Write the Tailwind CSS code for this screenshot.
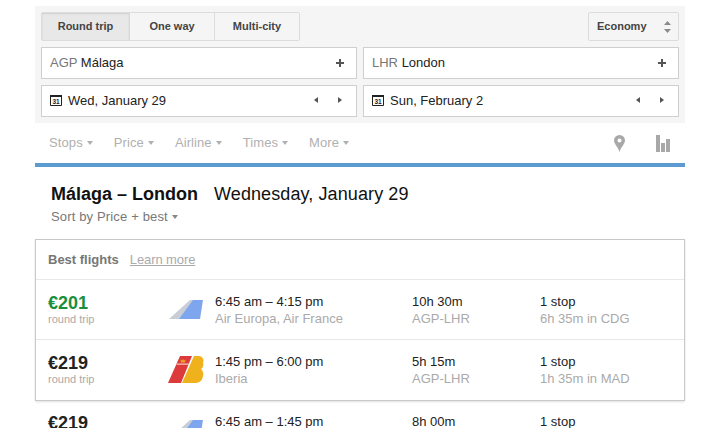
<!DOCTYPE html>
<html lang="en">
<head>
    <meta charset="UTF-8">
    <title>Flights</title>
    <script src="https://cdn.jsdelivr.net/npm/@tailwindcss/browser@4"></script>
</head>
<body class="bg-white h-[428px] overflow-hidden font-['Liberation_Sans',Arial,sans-serif] text-[#222]">
<div class="w-[650px] ml-[35px] pt-[6px]">

    <!-- Search panel -->
    <div class="bg-[#f5f5f5] h-[117px] px-[6px] pt-[6px] flex flex-col gap-[6px]">
        <div class="flex justify-between h-[29px]">
            <div class="flex text-[11px] font-bold text-[#444] border border-[#dcdcdc] rounded-[2px]">
                <div class="w-[88px] flex items-center justify-center bg-[#e8e8e8] border-r border-[#d8d8d8] shadow-[inset_0_1px_2px_rgba(0,0,0,0.1)]">Round trip</div>
                <div class="w-[85px] flex items-center justify-center bg-[#f5f5f5] border-r border-[#dcdcdc]">One way</div>
                <div class="w-[84px] flex items-center justify-center bg-[#f5f5f5]">Multi-city</div>
            </div>
            <div class="w-[91px] flex items-center justify-between pl-[8px] pr-[7px] text-[11px] font-bold text-[#444] border border-[#dcdcdc] rounded-[2px]">
                Economy
                <svg width="7" height="12" viewBox="0 0 7 12"><path d="M3.500 0 7 4H0z M0 8h7l-3.500 4z" fill="#8a8a8a"/></svg>
            </div>
        </div>

        <div class="grid grid-cols-2 gap-[6px]">
            <div class="h-[32px] bg-white border border-[#cfcfcf] flex items-center justify-between pl-[8px] pr-[12px] text-[13px]">
                <span><span class="text-[#777]">AGP</span> Málaga</span>
                <svg class="-mt-[1px]" width="8" height="8" viewBox="0 0 8 8"><path d="M3 0h2v3h3v2H5v3H3V5H0V3h3z" fill="#555"/></svg>
            </div>
            <div class="h-[32px] bg-white border border-[#cfcfcf] flex items-center justify-between pl-[8px] pr-[12px] text-[13px]">
                <span><span class="text-[#777]">LHR</span> London</span>
                <svg class="-mt-[1px]" width="8" height="8" viewBox="0 0 8 8"><path d="M3 0h2v3h3v2H5v3H3V5H0V3h3z" fill="#555"/></svg>
            </div>
            <div class="h-[32px] bg-white border border-[#cfcfcf] flex items-center pl-[8px] pr-[14px] text-[13px]">
                <svg class="mr-[6px] -mt-[1px]" width="12" height="11" viewBox="0 0 12 11"><path d="M.5.500h11v10H.5z" fill="#fff" stroke="#222"/><path d="M0 0h12v2H0z" fill="#222"/><text x="6" y="9" text-anchor="middle" font-size="6.500" font-weight="700" fill="#222">31</text></svg>
                <span class="flex-1">Wed, January 29</span>
                <div class="flex gap-[20px] -mt-[2px]">
                    <svg width="4" height="6" viewBox="0 0 4 6"><path d="M4 0v6L0 3z" fill="#555"/></svg>
                    <svg width="4" height="6" viewBox="0 0 4 6"><path d="M0 0v6l4-3z" fill="#555"/></svg>
                </div>
            </div>
            <div class="h-[32px] bg-white border border-[#cfcfcf] flex items-center pl-[8px] pr-[14px] text-[13px]">
                <svg class="mr-[6px] -mt-[1px]" width="12" height="11" viewBox="0 0 12 11"><path d="M.5.500h11v10H.5z" fill="#fff" stroke="#222"/><path d="M0 0h12v2H0z" fill="#222"/><text x="6" y="9" text-anchor="middle" font-size="6.500" font-weight="700" fill="#222">31</text></svg>
                <span class="flex-1">Sun, February 2</span>
                <div class="flex gap-[20px] -mt-[2px]">
                    <svg width="4" height="6" viewBox="0 0 4 6"><path d="M4 0v6L0 3z" fill="#555"/></svg>
                    <svg width="4" height="6" viewBox="0 0 4 6"><path d="M0 0v6l4-3z" fill="#555"/></svg>
                </div>
            </div>
        </div>
    </div>

    <!-- Filters -->
    <div class="h-[40px] flex items-center pl-[14px] pr-[15px] text-[13px] tracking-[0.1px] text-[#b0b0b0] border-b-[4px] border-[#5b9bd1] box-content">
        <div class="flex-1 flex gap-[21px]">
            <span class="flex items-center gap-[4px]">Stops <i class="w-0 h-0 border-x-[3.500px] border-x-transparent border-t-[4px] border-t-[#b0b0b0]"></i></span>
            <span class="flex items-center gap-[4px]">Price <i class="w-0 h-0 border-x-[3.500px] border-x-transparent border-t-[4px] border-t-[#b0b0b0]"></i></span>
            <span class="flex items-center gap-[4px]">Airline <i class="w-0 h-0 border-x-[3.500px] border-x-transparent border-t-[4px] border-t-[#b0b0b0]"></i></span>
            <span class="flex items-center gap-[4px]">Times <i class="w-0 h-0 border-x-[3.500px] border-x-transparent border-t-[4px] border-t-[#b0b0b0]"></i></span>
            <span class="flex items-center gap-[4px]">More <i class="w-0 h-0 border-x-[3.500px] border-x-transparent border-t-[4px] border-t-[#b0b0b0]"></i></span>
        </div>
        <svg class="mr-[31px]" width="11" height="17" viewBox="0 0 11 17"><path fill-rule="evenodd" d="M5.500 0A5.500 5.500 0 0 1 11 5.500C11 9 7 12 5.500 17 4 12 0 9 0 5.500A5.500 5.500 0 0 1 5.500 0zm0 3.500a2 2 0 1 0 0 4 2 2 0 0 0 0-4z" fill="#a8a8a8"/></svg>
        <svg width="14" height="17" viewBox="0 0 14 17"><path d="M0 0h4v17H0zM5 8h4v9H5zM10 4h4v13h-4z" fill="#a8a8a8"/></svg>
    </div>

    <!-- Route heading -->
    <div class="h-[72px] pl-[16px] pt-[15px]">
        <div class="flex items-baseline gap-[16px] text-[18px] leading-[24px] text-[#111]">
            <span class="font-bold">Málaga – London</span>
            <span class="tracking-[0.1px]">Wednesday, January 29</span>
        </div>
        <div class="flex items-center gap-[4px] text-[13px] tracking-[0.15px] leading-[16px] mt-[3px] text-[#777]">Sort by Price + best <i class="w-0 h-0 border-x-[3.500px] border-x-transparent border-t-[4px] border-t-[#888]"></i></div>
    </div>

    <!-- Best flights card -->
    <div class="border border-[#c8c8c8] shadow-[0_1px_2px_rgba(0,0,0,0.12)]">
        <div class="h-[40px] flex items-center gap-[11px] pl-[12px] border-b border-[#e8e8e8]">
            <span class="text-[13px] font-bold text-[#777]">Best flights</span>
            <span class="text-[13px] tracking-[-0.1px] text-[#aaa] underline">Learn more</span>
        </div>
        <div class="h-[60px] flex items-start pt-[13px] border-b border-[#e8e8e8]">
            <div class="w-[133px] pl-[12px]">
                <div class="text-[18px] leading-[20px] font-bold text-[#1a8f3c]">€201</div>
                <div class="text-[11px] leading-[13px] text-[#aaa]">round trip</div>
            </div>
            <div class="w-[46px] mt-[6px]">
                <svg width="35" height="20" viewBox="0 0 35 20"><path d="M0 20 21 1h7L16 20z" fill="#c9ced6"/><path d="M10 20 24 1h10l-3 19z" fill="#7ea6ee"/></svg>
            </div>
            <div class="w-[197px]">
                <div class="text-[13px] leading-[17px]">6:45 am – 4:15 pm</div>
                <div class="text-[13px] leading-[17px] text-[#aaa]">Air Europa, Air France</div>
            </div>
            <div class="w-[128px]">
                <div class="text-[13px] leading-[17px]">10h 30m</div>
                <div class="text-[13px] leading-[17px] text-[#aaa]">AGP-LHR</div>
            </div>
            <div>
                <div class="text-[13px] leading-[17px]">1 stop</div>
                <div class="text-[13px] leading-[17px] text-[#aaa]">6h 35m in CDG</div>
            </div>
        </div>
        <div class="h-[60px] flex items-start pt-[13px]">
            <div class="w-[133px] pl-[12px]">
                <div class="text-[18px] leading-[20px] font-bold">€219</div>
                <div class="text-[11px] leading-[13px] text-[#aaa]">round trip</div>
            </div>
            <div class="w-[46px] mt-[3px] -ml-[1px] mr-[1px]">
                <svg width="36" height="27" viewBox="0 0 36 27">
                    <path d="M12 0h12L13 27H0z" fill="#dd3a3c"/>
                    <path d="M9 7.500h12.500l-.5 1.200H8.500z" fill="#f3c9b8"/>
                    <path d="M13 6.500l-.6-3 1.600 1 1-1.500 1 1.500 1.600-1-.6 3z" fill="#eda32a"/>
                    <path d="M26 0h5a4.500 4.500 0 0 1 4 6.500 6 6 0 0 1-1.800 6.500 7 7 0 0 1 1.800 7 8 8 0 0 1-7 7H14z" fill="#efb21d"/>
                </svg>
            </div>
            <div class="w-[197px]">
                <div class="text-[13px] leading-[17px]">1:45 pm – 6:00 pm</div>
                <div class="text-[13px] leading-[17px] text-[#aaa]">Iberia</div>
            </div>
            <div class="w-[128px]">
                <div class="text-[13px] leading-[17px]">5h 15m</div>
                <div class="text-[13px] leading-[17px] text-[#aaa]">AGP-LHR</div>
            </div>
            <div>
                <div class="text-[13px] leading-[17px]">1 stop</div>
                <div class="text-[13px] leading-[17px] text-[#aaa]">1h 35m in MAD</div>
            </div>
        </div>
    </div>

    <!-- Next flight, cut off by the window -->
    <div class="h-[28px] -mt-[1px] flex items-start pt-[13px] overflow-hidden">
        <div class="w-[134px] pl-[13px]">
            <div class="text-[18px] leading-[20px] font-bold">€219</div>
        </div>
        <div class="w-[46px] mt-[6px]">
            <svg width="35" height="20" viewBox="0 0 35 20"><path d="M0 20 21 1h7L16 20z" fill="#c9ced6"/><path d="M10 20 24 1h10l-3 19z" fill="#7ea6ee"/></svg>
        </div>
        <div class="w-[197px] text-[13px] leading-[17px]">6:45 am – 1:45 pm</div>
        <div class="w-[128px] text-[13px] leading-[17px]">8h 00m</div>
        <div class="text-[13px] leading-[17px]">1 stop</div>
    </div>
</div>
</body>
</html>
